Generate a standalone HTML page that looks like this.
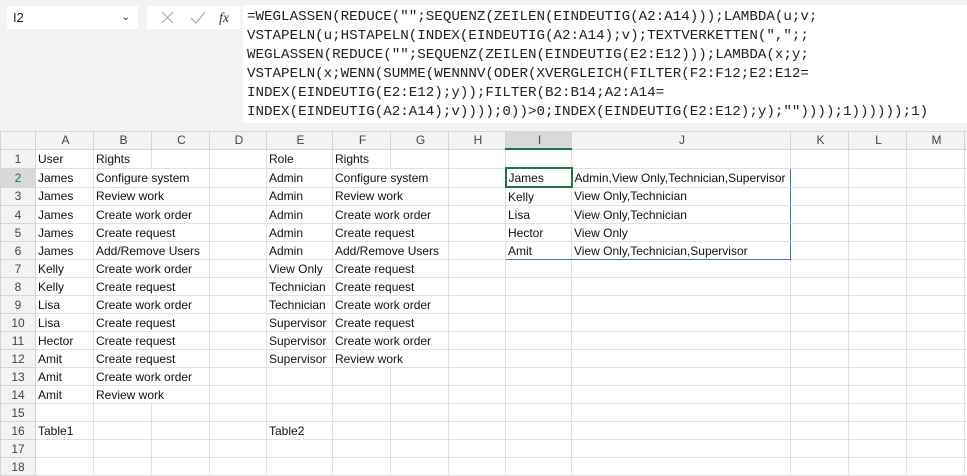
<!DOCTYPE html><html><head><style>
body{margin:0;width:967px;height:473px;background:#f3f3f3;position:relative;overflow:hidden;font-family:"Liberation Sans",sans-serif}
.nb{position:absolute;left:7px;top:6px;width:131px;height:23px;background:#fff;font-size:13px;line-height:23px;padding-left:6px;box-sizing:border-box;color:#222}
.fx{position:absolute;left:147px;top:6px;width:93px;height:23px;background:#fff}
.fb{position:absolute;left:243px;top:5px;width:724px;height:118px;background:#fff;font-family:"Liberation Mono",monospace;font-size:14.2px;line-height:19px;color:#222;padding:3px 0 0 4px;box-sizing:border-box;white-space:pre}
#g{position:absolute;left:0;top:131px;width:967px;border-collapse:collapse;table-layout:fixed;background:#fff;font-family:"Liberation Sans",sans-serif;font-size:12px}
#g td{border:1px solid #e1e1e1;height:17px;padding:0 0 0 2px;white-space:nowrap;overflow:visible;color:#111}
#g tr:first-child td{background:#f3f3f3;text-align:center;color:#444;border-color:#d5d5d5;height:16px}
#g td:first-child{background:#f3f3f3;text-align:center;color:#444;border-color:#d5d5d5;padding:0}
</style></head><body>
<div class="nb">I2<span style="position:absolute;right:8px;font-size:10px">&#8964;</span></div>
<div class="fx"><svg width="93" height="23"><path d="M15 6l11 11M26 6L15 17M44 12l5 5 9-11" stroke="#aaa" fill="none" stroke-width="1.2"/><text x="72" y="16" font-family="Liberation Serif" font-style="italic" font-size="14" fill="#333">fx</text></svg></div>
<div class="fb">=WEGLASSEN(REDUCE("";SEQUENZ(ZEILEN(EINDEUTIG(A2:A14)));LAMBDA(u;v;
VSTAPELN(u;HSTAPELN(INDEX(EINDEUTIG(A2:A14);v);TEXTVERKETTEN(",";;
WEGLASSEN(REDUCE("";SEQUENZ(ZEILEN(EINDEUTIG(E2:E12)));LAMBDA(x;y;
VSTAPELN(x;WENN(SUMME(WENNNV(ODER(XVERGLEICH(FILTER(F2:F12;E2:E12=
INDEX(EINDEUTIG(E2:E12);y));FILTER(B2:B14;A2:A14=
INDEX(EINDEUTIG(A2:A14);v))));0))&gt;0;INDEX(EINDEUTIG(E2:E12);y);""))));1))))));1)</div>
<table id="g">
<colgroup><col style="width:35px"><col style="width:58px"><col style="width:58px"><col style="width:58px"><col style="width:57px"><col style="width:66px"><col style="width:58px"><col style="width:58px"><col style="width:57px"><col style="width:66px"><col style="width:219px"><col style="width:58px"><col style="width:58px"><col style="width:58px"><col style="width:3px"></colgroup>
<tr><td></td><td>A</td><td>B</td><td>C</td><td>D</td><td>E</td><td>F</td><td>G</td><td>H</td><td style="background:#d9d9d9;border-bottom:2px solid #217346">I</td><td>J</td><td>K</td><td>L</td><td>M</td><td></td></tr>
<tr><td>1</td><td>User</td><td>Rights</td><td></td><td></td><td>Role</td><td>Rights</td><td></td><td></td><td></td><td></td><td></td><td></td><td></td><td></td></tr>
<tr><td style="background:#d9d9d9;color:#217346">2</td><td>James</td><td colspan="2">Configure system</td><td></td><td>Admin</td><td colspan="2">Configure system</td><td></td><td style="border:2px solid #217346">James</td><td style="border-top:1px solid #4472c4;border-right:1px solid #4472c4">Admin,View Only,Technician,Supervisor</td><td></td><td></td><td></td><td></td></tr>
<tr><td>3</td><td>James</td><td colspan="2">Review work</td><td></td><td>Admin</td><td colspan="2">Review work</td><td></td><td style="border-left:1px solid #4472c4">Kelly</td><td style="border-right:1px solid #4472c4">View Only,Technician</td><td></td><td></td><td></td><td></td></tr>
<tr><td>4</td><td>James</td><td colspan="2">Create work order</td><td></td><td>Admin</td><td colspan="2">Create work order</td><td></td><td style="border-left:1px solid #4472c4">Lisa</td><td style="border-right:1px solid #4472c4">View Only,Technician</td><td></td><td></td><td></td><td></td></tr>
<tr><td>5</td><td>James</td><td colspan="2">Create request</td><td></td><td>Admin</td><td colspan="2">Create request</td><td></td><td style="border-left:1px solid #4472c4">Hector</td><td style="border-right:1px solid #4472c4">View Only</td><td></td><td></td><td></td><td></td></tr>
<tr><td>6</td><td>James</td><td colspan="2">Add/Remove Users</td><td></td><td>Admin</td><td colspan="2">Add/Remove Users</td><td></td><td style="border-left:1px solid #4472c4;border-bottom:1px solid #4472c4">Amit</td><td style="border-right:1px solid #4472c4;border-bottom:1px solid #4472c4">View Only,Technician,Supervisor</td><td></td><td></td><td></td><td></td></tr>
<tr><td>7</td><td>Kelly</td><td colspan="2">Create work order</td><td></td><td>View Only</td><td colspan="2">Create request</td><td></td><td></td><td></td><td></td><td></td><td></td><td></td></tr>
<tr><td>8</td><td>Kelly</td><td colspan="2">Create request</td><td></td><td>Technician</td><td colspan="2">Create request</td><td></td><td></td><td></td><td></td><td></td><td></td><td></td></tr>
<tr><td>9</td><td>Lisa</td><td colspan="2">Create work order</td><td></td><td>Technician</td><td colspan="2">Create work order</td><td></td><td></td><td></td><td></td><td></td><td></td><td></td></tr>
<tr><td>10</td><td>Lisa</td><td colspan="2">Create request</td><td></td><td>Supervisor</td><td colspan="2">Create request</td><td></td><td></td><td></td><td></td><td></td><td></td><td></td></tr>
<tr><td>11</td><td>Hector</td><td colspan="2">Create request</td><td></td><td>Supervisor</td><td colspan="2">Create work order</td><td></td><td></td><td></td><td></td><td></td><td></td><td></td></tr>
<tr><td>12</td><td>Amit</td><td colspan="2">Create request</td><td></td><td>Supervisor</td><td colspan="2">Review work</td><td></td><td></td><td></td><td></td><td></td><td></td><td></td></tr>
<tr><td>13</td><td>Amit</td><td colspan="2">Create work order</td><td></td><td></td><td></td><td></td><td></td><td></td><td></td><td></td><td></td><td></td><td></td></tr>
<tr><td>14</td><td>Amit</td><td colspan="2">Review work</td><td></td><td></td><td></td><td></td><td></td><td></td><td></td><td></td><td></td><td></td><td></td></tr>
<tr><td>15</td><td></td><td></td><td></td><td></td><td></td><td></td><td></td><td></td><td></td><td></td><td></td><td></td><td></td><td></td></tr>
<tr><td>16</td><td>Table1</td><td></td><td></td><td></td><td>Table2</td><td></td><td></td><td></td><td></td><td></td><td></td><td></td><td></td><td></td></tr>
<tr><td>17</td><td></td><td></td><td></td><td></td><td></td><td></td><td></td><td></td><td></td><td></td><td></td><td></td><td></td><td></td></tr>
<tr><td>18</td><td></td><td></td><td></td><td></td><td></td><td></td><td></td><td></td><td></td><td></td><td></td><td></td><td></td><td></td></tr>
</table>
</body></html>
